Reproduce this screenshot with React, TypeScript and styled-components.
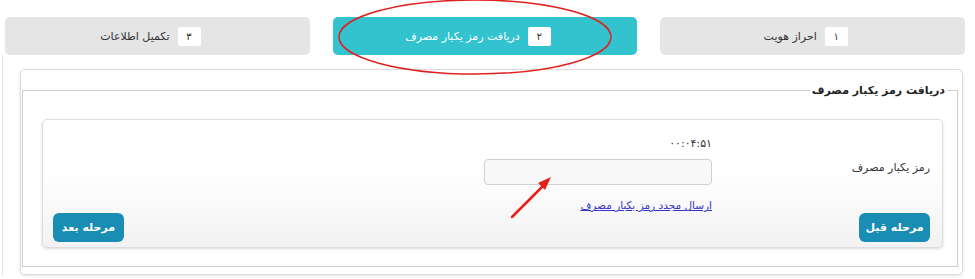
import styled, { createGlobalStyle } from "styled-components";

const GlobalStyle = createGlobalStyle`
  html, body {
    margin: 0;
    padding: 0;
    background: #fff;
    font-family: "DejaVu Sans", "Noto Sans", sans-serif;
  }
`;

const Page = styled.div`
  position: relative;
  direction: rtl;
  width: 975px;
  height: 279px;
  padding-top: 17px;
  box-sizing: border-box;
  overflow: hidden;
`;

const Steps = styled.div`
  display: grid;
  grid-template-columns: repeat(3, 1fr);
  gap: 23px;
  margin: 0 10px 0 5px;
`;

const Step = styled.div<{ $active?: boolean }>`
  height: 38px;
  border-radius: 5px;
  background: ${(p) => (p.$active ? "#33c3cf" : "#e5e5e5")};
  color: ${(p) => (p.$active ? "#fff" : "#333")};
  display: flex;
  align-items: center;
  justify-content: center;
  gap: 8px;
  padding-right: 14px;
  font-size: 11px;
`;

const StepNo = styled.span`
  width: 23px;
  height: 19px;
  border-radius: 2px;
  background: #fff;
  color: #333;
  font-size: 10px;
  display: flex;
  align-items: center;
  justify-content: center;
`;

const Body = styled.div`
  margin-left: 2px;
  border-left: 1px solid #e4e4e4;
  padding: 14px 12px 0 17px;
`;

const Panel = styled.div`
  height: 206px;
  box-sizing: border-box;
  border: 1px solid #dcdcdc;
  border-radius: 5px;
  box-shadow: 0 1px 3px rgba(0, 0, 0, 0.12);
  padding: 14px 4px 0 1px;
`;

const Fieldset = styled.fieldset`
  margin: 0;
  height: 183px;
  box-sizing: border-box;
  border: 1px solid #cfcfcf;
  padding: 22px 14px 0 19px;
`;

const Legend = styled.legend`
  margin-right: -4px;
  padding: 0 2px;
  font-size: 11px;
  font-weight: bold;
  color: #222;
`;

const Card = styled.div`
  height: 129px;
  box-sizing: border-box;
  border: 1px solid #dedede;
  border-radius: 5px;
  background: linear-gradient(#fff 40%, #f2f2f2);
  box-shadow: 0 1px 3px rgba(0, 0, 0, 0.15);
  padding: 14px 12px 5px 10px;
  display: flex;
  flex-direction: column;
  justify-content: space-between;
`;

const FormGrid = styled.div`
  display: grid;
  grid-template-columns: 218px 228px;
  grid-template-rows: 14px 26px 14px;
  row-gap: 11px;
`;

const Timer = styled.div`
  grid-column: 2;
  grid-row: 1;
  padding-top: 3px;
  font-size: 11px;
  color: #333;
  letter-spacing: 1.5px;
  direction: ltr;
  text-align: right;
`;

const Label = styled.label`
  grid-column: 1;
  grid-row: 2;
  font-size: 11px;
  color: #333;
  padding-top: 2px;
`;

const Input = styled.input`
  grid-column: 2;
  grid-row: 2;
  box-sizing: border-box;
  width: 228px;
  height: 26px;
  border: 1px solid #cfcfcf;
  border-radius: 4px;
  background: #f9f9f9;
  outline: none;
`;

const Resend = styled.a`
  grid-column: 2;
  grid-row: 3;
  margin-top: 3px;
  font-size: 10.5px;
  color: #3535c8;
  text-decoration: underline;
  cursor: pointer;
`;

const Buttons = styled.div`
  display: flex;
  justify-content: space-between;
`;

const Button = styled.button`
  width: 71px;
  height: 29px;
  border: none;
  border-radius: 6px;
  background: #1a8db5;
  color: #fff;
  font-family: inherit;
  font-size: 11px;
  font-weight: bold;
`;

const Mark = styled.svg`
  position: absolute;
  pointer-events: none;
`;

export default function App() {
  return (
    <>
      <GlobalStyle />
      <Page>
        <Steps>
          <Step>
            <StepNo>۱</StepNo>
            احراز هویت
          </Step>
          <Step $active>
            <StepNo>۲</StepNo>
            دریافت رمز یکبار مصرف
          </Step>
          <Step>
            <StepNo>۳</StepNo>
            تکمیل اطلاعات
          </Step>
        </Steps>
        <Body>
          <Panel>
            <Fieldset>
              <Legend>دریافت رمز یکبار مصرف</Legend>
              <Card>
                <FormGrid>
                  <Timer>۰۰:۰۴:۵۱</Timer>
                  <Label>رمز یکبار مصرف</Label>
                  <Input type="text" />
                  <Resend>ارسال مجدد رمز یکبار مصرف</Resend>
                </FormGrid>
                <Buttons>
                  <Button>مرحله قبل</Button>
                  <Button>مرحله بعد</Button>
                </Buttons>
              </Card>
            </Fieldset>
          </Panel>
        </Body>
        <Mark style={{ left: 336, top: 0 }} width="282" height="78" viewBox="0 0 282 78">
          <ellipse cx="139" cy="37" rx="136" ry="37" fill="none" stroke="#e0201e" strokeWidth="1.5" />
        </Mark>
        <Mark style={{ left: 508, top: 172 }} width="48" height="50" viewBox="0 0 48 50">
          <line x1="4" y1="45" x2="36" y2="13" stroke="#e8201c" strokeWidth="2.5" strokeLinecap="round" />
          <polygon points="43,5 30,11 37,18" fill="#e8201c" />
        </Mark>
      </Page>
    </>
  );
}
